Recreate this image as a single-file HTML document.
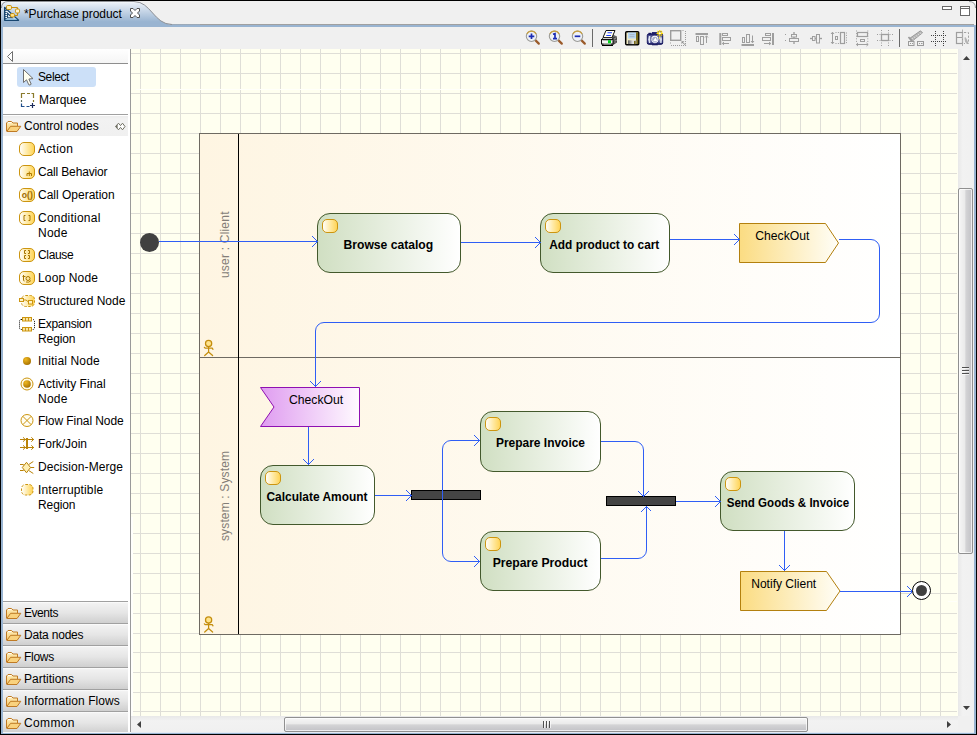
<!DOCTYPE html>
<html><head><meta charset="utf-8"><title>Purchase product</title>
<style>
html,body{margin:0;padding:0}
body{width:977px;height:735px;background:#000;position:relative;overflow:hidden;font-family:"Liberation Sans", sans-serif;font-size:12px;color:#000}
.a{position:absolute}
.t{position:absolute;white-space:nowrap;line-height:14px;height:14px}
.dr{position:absolute;left:3px;width:125px;height:21px;background:linear-gradient(#fdfdfd,#f1f1f1 8%,#e6e6e6 50%,#cfcfcf)}
svg text{font-family:"Liberation Sans", sans-serif}
</style></head>
<body>
<div class="a" style="left:1px;top:1px;width:975px;height:733px;background:#99b4d1"></div>
<div class="a" style="left:1px;top:1px;width:975px;height:24px;background:#f0f0f0"></div>
<div class="a" style="left:170px;top:24px;width:804px;height:1px;background:#a0a0a0"></div>
<div class="a" style="left:1px;top:25px;width:975px;height:2px;background:#99b4d1"></div>
<div class="a" style="left:3px;top:27px;width:971px;height:22px;background:#f0f0f0"></div>
<div class="a" style="left:3px;top:732px;width:971px;height:1px;background:#e4ebf3"></div>
<div class="a" style="left:3px;top:49px;width:127px;height:683px;background:#fff"></div>
<div class="a" style="left:130px;top:49px;width:1px;height:683px;background:#9a9a9a"></div>
<div class="a" style="left:3px;top:49px;width:125px;height:14px;background:linear-gradient(#ffffff,#f5f5f5)"></div>
<div class="a" style="left:3px;top:63px;width:125px;height:1px;background:#8e8e8e"></div>
<div class="a" style="left:17px;top:67px;width:79px;height:20px;background:#cce0f8;border-radius:3px"></div>
<div class="a" style="left:3px;top:114px;width:125px;height:1px;background:#a0a0a0"></div>
<div class="a" style="left:3px;top:116px;width:125px;height:20px;background:linear-gradient(#ececec,#f2f2f2 15%,#f0f0f0)"></div>
<div class="a" style="left:3px;top:601px;width:125px;height:1px;background:#a0a0a0"></div>
<div class="dr" style="top:602px"></div>
<div class="a" style="left:3px;top:623px;width:125px;height:1px;background:#a0a0a0"></div>
<div class="dr" style="top:624px"></div>
<div class="a" style="left:3px;top:645px;width:125px;height:1px;background:#a0a0a0"></div>
<div class="dr" style="top:646px"></div>
<div class="a" style="left:3px;top:667px;width:125px;height:1px;background:#a0a0a0"></div>
<div class="dr" style="top:668px"></div>
<div class="a" style="left:3px;top:689px;width:125px;height:1px;background:#a0a0a0"></div>
<div class="dr" style="top:690px"></div>
<div class="a" style="left:3px;top:711px;width:125px;height:1px;background:#a0a0a0"></div>
<div class="dr" style="top:712px"></div>
<div class="a" style="left:3px;top:732px;width:128px;height:1px;background:#f4f6f9"></div>
<div class="a" style="left:131px;top:49px;width:827px;height:595px;background-color:#fffff0;background-image:linear-gradient(to right,#dfded7 1px,transparent 1px),linear-gradient(to bottom,#dfded7 1px,transparent 1px);background-size:20px 20px;background-position:9px 4px"></div>
<div class="a" style="left:131px;top:644px;width:827px;height:59px;background-color:#fffff0;background-image:linear-gradient(to right,#dfded7 1px,transparent 1px),linear-gradient(to bottom,#dfded7 1px,transparent 1px);background-size:20px 20px;background-position:9px 8px"></div>
<div class="a" style="left:131px;top:703px;width:827px;height:13px;background-color:#fffff0;background-image:linear-gradient(to right,#dfded7 1px,transparent 1px),linear-gradient(to bottom,#dfded7 1px,transparent 1px);background-size:20px 20px;background-position:9px 8px"></div>
<div class="a" style="left:136px;top:89px;width:797px;height:1px;background:#fffffa"></div>
<div class="a" style="left:131px;top:517px;width:2px;height:199px;background:#fffffb"></div>
<div class="a" style="left:957px;top:49px;width:1px;height:667px;background:#fffff2"></div>
<div class="a" style="left:958px;top:49px;width:16px;height:683px;background:linear-gradient(to right,#e8e8e8,#f2f2f2 30%,#f0f0f0)"></div>
<div class="a" style="left:131px;top:716px;width:827px;height:16px;background:linear-gradient(#e8e8e8,#f2f2f2 30%,#f0f0f0)"></div>
<div class="a" style="left:958px;top:716px;width:16px;height:16px;background:#f0f0f0"></div>
<div class="a" style="left:958px;top:188px;width:13px;height:364px;border:1px solid #909090;border-radius:2px;box-shadow:inset 0 0 0 1px rgba(255,255,255,.7);background:linear-gradient(to right,#f6f6f6,#eaeaea 46%,#d4d4d6 52%,#c2c2c6)"></div>
<div class="a" style="left:284px;top:717px;width:522px;height:13px;border:1px solid #909090;border-radius:2px;box-shadow:inset 0 0 0 1px rgba(255,255,255,.7);background:linear-gradient(#f6f6f6,#eaeaea 46%,#d4d4d6 52%,#c2c2c6)"></div>
<svg class="a" style="left:0;top:0" width="977" height="735">
<defs>
<linearGradient id="tg" x1="0" y1="0" x2="0" y2="1"><stop offset="0" stop-color="#ffffff"/><stop offset="0.1" stop-color="#e6edf6"/><stop offset="0.8" stop-color="#99b4d1"/><stop offset="1" stop-color="#99b4d1"/></linearGradient>
<linearGradient id="ico" x1="0" y1="0" x2="1" y2="0"><stop offset="0" stop-color="#ffffff"/><stop offset="0.5" stop-color="#ffeaa6"/><stop offset="1" stop-color="#ffd352"/></linearGradient>
<linearGradient id="fold" x1="0" y1="0" x2="0" y2="1"><stop offset="0" stop-color="#fff0c0"/><stop offset="1" stop-color="#f5c868"/></linearGradient>
<radialGradient id="ball" cx="0.35" cy="0.3" r="0.8"><stop offset="0" stop-color="#f0b820"/><stop offset="1" stop-color="#a06c00"/></radialGradient>
<linearGradient id="metal" x1="0" y1="0" x2="1" y2="0"><stop offset="0" stop-color="#606060"/><stop offset="0.6" stop-color="#e8e8e8"/><stop offset="1" stop-color="#a0a0a0"/></linearGradient>
<linearGradient id="cam" x1="0" y1="0" x2="0" y2="1"><stop offset="0" stop-color="#1c1c70"/><stop offset="0.3" stop-color="#7880b0"/><stop offset="0.55" stop-color="#c4c8de"/><stop offset="0.8" stop-color="#50589a"/><stop offset="1" stop-color="#14145c"/></linearGradient>
</defs>
<path d="M1,27 L1,6 Q1,1 6,1 L134,1 C151,1 154,24.5 172,24.5 L200,24.5 L200,27 Z" fill="url(#tg)"/>
<path d="M1.5,8 Q1.5,1.5 8,1.5 L134,1.5 C151,1.5 154,24.5 172,24.5" fill="none" stroke="#8e9196" stroke-width="1"/>
<path d="M969,1 H976 V8 Q976,1 969,1 Z" fill="#fff"/><path d="M969,1.5 Q975.5,1.5 975.5,8" fill="none" stroke="#9a9da2" stroke-width="1"/>
<g><path d="M4.7,7.5 L4.7,20.3 L18.5,20.3 Z" fill="#f4f8fc" stroke="#17456f" stroke-width="1.4" stroke-linejoin="round"/><path d="M6,18.6 H16 L17.5,19.8 H6 Z" fill="#8cc4ea"/><path d="M7.6,13.4 L7.6,17.8 L12.2,17.8 Z" fill="#ffffff" stroke="#17456f" stroke-width="1.1"/><path d="M5,10.5h1.8M5,12.5h1.8M5,14.5h1.8M5,16.5h1.8M5,18.5h1.8" stroke="#17456f" stroke-width="0.9"/><path d="M11.5,7.5 L17.5,7.5 L17.5,9 M17.5,13 L17.5,15.5 L14.5,15.5" fill="none" stroke="#c8900c" stroke-width="1"/><rect x="6.5" y="5.5" width="5" height="4" rx="1.2" fill="#ffedb0" stroke="#c8900c"/><rect x="15.5" y="9" width="4" height="4" rx="1.2" fill="#fff4d0" stroke="#c8900c"/><rect x="10.5" y="13.5" width="4" height="3.6" rx="1.2" fill="#ffe28a" stroke="#c8900c"/></g>
<path d="M130.5,8.5 H133 L135,10.5 L137,8.5 H139.5 V11 L137.5,13 L139.5,15 V17.5 H137 L135,15.5 L133,17.5 H130.5 V15 L132.5,13 L130.5,11 Z" fill="#fff" stroke="#4e4e4e" stroke-width="1" stroke-linejoin="round"/>
<rect x="942.5" y="6.5" width="9" height="3" fill="#fff" stroke="#686868"/>
<rect x="960.5" y="6.5" width="9" height="9" fill="#fff" stroke="#686868"/>
<line x1="960" y1="8.5" x2="970" y2="8.5" stroke="#686868"/>
<path d="M12.5,51.5 L12.5,61.5 L7.5,56.5 Z" fill="#fff" stroke="#707070" stroke-width="1" stroke-linejoin="miter"/>
<path d="M23.5,69.5 L23.5,82.5 L26.5,79.8 L28.8,84.8 Q30,85.6 31.2,84.2 L28.9,79 L33,78.6 Z" fill="#fffff0" stroke="#6e6e6e" stroke-width="1" stroke-linejoin="round"/>
<path d="M21.5,98 V93.5 H25 M27,93.5 H30 M31.5,93.5 H33.5 V98 M33.5,100 V102" fill="none" stroke="#8a7a2c" stroke-width="1.2"/>
<path d="M21.5,100 V102" fill="none" stroke="#5a6a5c" stroke-width="1.2"/>
<path d="M21.5,103.5 V106.5 H24.5 M26.5,106.5 H29.5" fill="none" stroke="#1f4e8c" stroke-width="1.2"/>
<path d="M30,105.5 H35 M32.5,103 V108" fill="none" stroke="#1a2a5a" stroke-width="1.2"/>
<g transform="translate(6,121)"><path d="M0.5,10 V2 L2,0.5 H5.5 L7,2 H11.5 V5" fill="url(#fold)" stroke="#bf7a24" stroke-width="1" stroke-linejoin="round"/><path d="M2,1.6 H5.4" stroke="#fff" stroke-width="1"/><path d="M0.8,10.5 L4.6,5.3 H14.8 L11,10.5 Z" fill="#f9d27e" stroke="#bf7a24" stroke-width="1" stroke-linejoin="round"/></g>
<g transform="translate(6,608)"><path d="M0.5,10 V2 L2,0.5 H5.5 L7,2 H11.5 V5" fill="url(#fold)" stroke="#bf7a24" stroke-width="1" stroke-linejoin="round"/><path d="M2,1.6 H5.4" stroke="#fff" stroke-width="1"/><path d="M0.8,10.5 L4.6,5.3 H14.8 L11,10.5 Z" fill="#f9d27e" stroke="#bf7a24" stroke-width="1" stroke-linejoin="round"/></g>
<g transform="translate(6,630)"><path d="M0.5,10 V2 L2,0.5 H5.5 L7,2 H11.5 V5" fill="url(#fold)" stroke="#bf7a24" stroke-width="1" stroke-linejoin="round"/><path d="M2,1.6 H5.4" stroke="#fff" stroke-width="1"/><path d="M0.8,10.5 L4.6,5.3 H14.8 L11,10.5 Z" fill="#f9d27e" stroke="#bf7a24" stroke-width="1" stroke-linejoin="round"/></g>
<g transform="translate(6,652)"><path d="M0.5,10 V2 L2,0.5 H5.5 L7,2 H11.5 V5" fill="url(#fold)" stroke="#bf7a24" stroke-width="1" stroke-linejoin="round"/><path d="M2,1.6 H5.4" stroke="#fff" stroke-width="1"/><path d="M0.8,10.5 L4.6,5.3 H14.8 L11,10.5 Z" fill="#f9d27e" stroke="#bf7a24" stroke-width="1" stroke-linejoin="round"/></g>
<g transform="translate(6,674)"><path d="M0.5,10 V2 L2,0.5 H5.5 L7,2 H11.5 V5" fill="url(#fold)" stroke="#bf7a24" stroke-width="1" stroke-linejoin="round"/><path d="M2,1.6 H5.4" stroke="#fff" stroke-width="1"/><path d="M0.8,10.5 L4.6,5.3 H14.8 L11,10.5 Z" fill="#f9d27e" stroke="#bf7a24" stroke-width="1" stroke-linejoin="round"/></g>
<g transform="translate(6,696)"><path d="M0.5,10 V2 L2,0.5 H5.5 L7,2 H11.5 V5" fill="url(#fold)" stroke="#bf7a24" stroke-width="1" stroke-linejoin="round"/><path d="M2,1.6 H5.4" stroke="#fff" stroke-width="1"/><path d="M0.8,10.5 L4.6,5.3 H14.8 L11,10.5 Z" fill="#f9d27e" stroke="#bf7a24" stroke-width="1" stroke-linejoin="round"/></g>
<g transform="translate(6,718)"><path d="M0.5,10 V2 L2,0.5 H5.5 L7,2 H11.5 V5" fill="url(#fold)" stroke="#bf7a24" stroke-width="1" stroke-linejoin="round"/><path d="M2,1.6 H5.4" stroke="#fff" stroke-width="1"/><path d="M0.8,10.5 L4.6,5.3 H14.8 L11,10.5 Z" fill="#f9d27e" stroke="#bf7a24" stroke-width="1" stroke-linejoin="round"/></g>
<path d="M115.5,126.5 L118.5,123.2 L120.5,125.6 L122.5,123.2 L125,126.5 L122.5,129.8 L120.5,127.4 L118.5,129.8 Z" fill="#fff" stroke="#707064" stroke-width="1"/>
<path d="M115.5,126.5 L117.6,124.4 L117.6,128.6 Z" fill="#707064"/>
<rect x="19.5" y="142.5" width="15" height="13" rx="4.5" fill="url(#ico)" stroke="#cc9510"/>
<rect x="19.5" y="165.5" width="15" height="13" rx="4.5" fill="url(#ico)" stroke="#cc9510"/><path d="M27,176 V173.5 H31.5 V176 M29.3,171.5 V176" fill="none" stroke="#b07a00" stroke-width="1"/>
<rect x="19.5" y="188.5" width="15" height="13" rx="4.5" fill="url(#ico)" stroke="#cc9510"/><text x="21.8" y="198.4" font-size="8.5" fill="#a06c00" font-weight="bold" textLength="11" lengthAdjust="spacingAndGlyphs">o()</text>
<rect x="19.5" y="211.5" width="15" height="13" rx="4.5" fill="url(#ico)" stroke="#cc9510"/><path d="M25.5,215.5 H24 V220.5 H25.5 M28.5,215.5 H30 V220.5 H28.5" fill="none" stroke="#a87400" stroke-width="1"/>
<rect x="19.5" y="248.5" width="15" height="13" rx="4.5" fill="url(#ico)" stroke="#cc9510"/><path d="M26,250.5 H24.5 V253.5 H26 M28,250.5 H29.5 V253.5 H28 M26,255.5 H24.5 V258.5 H26 M28,255.5 H29.5 V258.5 H28" fill="none" stroke="#a87400" stroke-width="1"/>
<rect x="19.5" y="271.5" width="15" height="13" rx="4.5" fill="url(#ico)" stroke="#cc9510"/><path d="M23.5,275 V280 Q23.5,281 24.5,281 M22.5,276.5 H25.5" fill="none" stroke="#a87400" stroke-width="1"/><circle cx="28" cy="278.5" r="2" fill="none" stroke="#a87400"/><path d="M26,282 Q29,283 31,280.5" fill="none" stroke="#a87400" stroke-width="0.9"/>
<rect x="21.5" y="295.5" width="13" height="11" rx="4" fill="url(#ico)" stroke="#cc9510" stroke-dasharray="2.5,1.5"/>
<rect x="19.5" y="298.5" width="4" height="3" fill="#fff3c8" stroke="#cc9510"/><rect x="28.5" y="300.5" width="4" height="3.5" fill="#fff3c8" stroke="#cc9510"/><path d="M23.5,300 L26,300 L28.5,302" fill="none" stroke="#cc9510"/>
<rect x="19.5" y="319.5" width="15" height="10" rx="1.5" fill="none" stroke="#101010" stroke-dasharray="1,1"/>
<rect x="22.5" y="317.5" width="9" height="3.5" fill="#fbe6a2" stroke="#cc9510"/><path d="M25.5,317.5 v3.5 M28.5,317.5 v3.5" stroke="#cc9510"/>
<rect x="22.5" y="327.5" width="9" height="3.5" fill="#fbe6a2" stroke="#cc9510"/><path d="M25.5,327.5 v3.5 M28.5,327.5 v3.5" stroke="#cc9510"/>
<circle cx="27" cy="361" r="4" fill="url(#ball)"/>
<circle cx="27" cy="384" r="6" fill="#fffbe8" stroke="#cc9510"/><circle cx="27" cy="384" r="3.8" fill="url(#ball)"/>
<circle cx="27" cy="420.5" r="6" fill="#fffdf2" stroke="#cc9510"/><path d="M22.8,416.3 L31.2,424.7 M31.2,416.3 L22.8,424.7" stroke="#cc9510"/>
<rect x="26" y="438" width="2" height="11" fill="#b98207"/><path d="M20,439.5 H26 M23,437.3 L25.3,439.5 L23,441.7 M20,447.5 H26 M23,445.3 L25.3,447.5 L23,449.7 M28,439.5 H34 M31.3,437.3 L33.6,439.5 L31.3,441.7 M28,447.5 H34 M31.3,445.3 L33.6,447.5 L31.3,449.7" fill="none" stroke="#b98207" stroke-width="1"/>
<path d="M20,464.5 H23 L24.5,465.5 M20,470.5 H23 L24.5,469.5 M29,464.3 L33.3,461.5 M30.5,467.5 H34.2 M29,470.7 L33.3,473.5" fill="none" stroke="#b98207" stroke-width="1"/><path d="M26.5,462.3 L30.5,467.5 L26.5,472.8 L22.3,467.5 Z" fill="#fff0b4" stroke="#b98207"/>
<rect x="21.5" y="484.5" width="11.5" height="10.5" rx="4" fill="url(#ico)" stroke="#cc9510" stroke-dasharray="2.5,1.5"/>
<path d="M535.3,40.099999999999994 L538.8,43.599999999999994" stroke="#9a5a2a" stroke-width="2.2" stroke-linecap="round"/>
<circle cx="531.5" cy="36.3" r="5.2" fill="#eef1f6" stroke="#9c9c98" stroke-width="1.1"/>
<path d="M526.9,33.9 A5.2,5.2 0 0 1 536.1,33.9" fill="none" stroke="#c8a040" stroke-width="1.1"/>
<path d="M528.7,36.3 H534.3 M531.5,33.5 V39.1" stroke="#1c2cb4" stroke-width="1.7"/>
<path d="M558.3,40.099999999999994 L561.8,43.599999999999994" stroke="#9a5a2a" stroke-width="2.2" stroke-linecap="round"/>
<circle cx="554.5" cy="36.3" r="5.2" fill="#eef1f6" stroke="#9c9c98" stroke-width="1.1"/>
<path d="M549.9,33.9 A5.2,5.2 0 0 1 559.1,33.9" fill="none" stroke="#c8a040" stroke-width="1.1"/>
<path d="M553,34.2 L555,33.6 V38.6 M553,38.6 H557" fill="none" stroke="#1c2cb4" stroke-width="1.7"/>
<path d="M581.3,40.099999999999994 L584.8,43.599999999999994" stroke="#9a5a2a" stroke-width="2.2" stroke-linecap="round"/>
<circle cx="577.5" cy="36.3" r="5.2" fill="#eef1f6" stroke="#9c9c98" stroke-width="1.1"/>
<path d="M572.9,33.9 A5.2,5.2 0 0 1 582.1,33.9" fill="none" stroke="#c8a040" stroke-width="1.1"/>
<path d="M574.7,36.3 H580.3" stroke="#1c2cb4" stroke-width="1.7"/>
<line x1="592.5" y1="29" x2="592.5" y2="47" stroke="#6a6a6a" shape-rendering="crispEdges"/>
<line x1="899.5" y1="29" x2="899.5" y2="47" stroke="#6a6a6a" shape-rendering="crispEdges"/>
<g><path d="M612.5,34.5 L617,36.5 V42.5 L613,45 Z" fill="#4a4a4a"/><path d="M613.5,36 h1 M615.5,37 h1 M614.5,38.5 h1 M613.5,40 h1 M615.5,40.5 h1 M614.5,42 h1" stroke="#c8c8c8" stroke-width="0.9"/><path d="M606,30.5 H615 L612,37.5 H603 Z" fill="#fffff4" stroke="#111" stroke-width="1"/><path d="M607.5,32.7 H612 M606.3,35.5 H611" stroke="#2040ff" stroke-width="1.1"/><path d="M601.5,39.5 L603.5,37.5 H612.5 V39.5 Z" fill="#d0d0d0" stroke="#111" stroke-width="0.8"/><rect x="601.5" y="39.5" width="11.5" height="4.5" fill="#f4f4f4" stroke="#111"/><path d="M602.5,40.5 H612" stroke="#b0b0b0" stroke-width="0.9"/><rect x="608" y="40.2" width="3" height="3.3" fill="#00d420"/><path d="M602,45.2 H613" stroke="#000" stroke-width="1.6"/><path d="M603.5,44 H611" stroke="#fff" stroke-width="0.7"/></g>
<g><rect x="625.7" y="31.7" width="13" height="13" rx="1" fill="#efe9c4" stroke="#000" stroke-width="1.5"/><rect x="636" y="32.5" width="2.2" height="11.5" fill="#7a6a18"/><rect x="628" y="32.5" width="8" height="6" fill="#b8d8f6"/><path d="M629.5,34.7 H634.5 M629.5,36.7 H634.5" stroke="#a8b0b8" stroke-width="0.9"/><rect x="628" y="40.3" width="8.5" height="3.8" fill="url(#metal)"/><rect x="634" y="41" width="1.6" height="3.1" fill="#7a6a18"/></g>
<g><rect x="648.5" y="32.8" width="3" height="2" fill="#1a1a66"/><rect x="652" y="32" width="5.5" height="2.5" fill="#2a2a74"/><rect x="647.3" y="34" width="15.4" height="10.3" rx="1.4" fill="url(#cam)" stroke="#14145c" stroke-width="1"/><path d="M649.6,36 V43 M660.9,37.5 V43" stroke="#e4e8f2" stroke-width="1.3"/><circle cx="654.9" cy="39.3" r="4.1" fill="#f6f7fb" stroke="#2a2a74" stroke-width="0.8"/><circle cx="654.9" cy="39.5" r="2.7" fill="#a4aac8"/><path d="M653,41.2 L655.4,37.4 L657.4,41.2 Z" fill="#fff"/><rect x="652" y="44.3" width="5.8" height="1" fill="#14145c"/><path d="M659.8,30 V36.6 M656.5,33.3 H663 M657.5,31 L662,35.6 M662,31 L657.5,35.6" stroke="#ffdc00" stroke-width="1.2"/><circle cx="659.8" cy="33.3" r="1.1" fill="#fff"/><path d="M658.3,31.8 h1 M660.3,31.8 h1 M658.3,34.8 h1 M660.3,34.8 h1" stroke="#303080" stroke-width="0.9"/><path d="M660,36.6 L659.2,39" stroke="#ffe870" stroke-width="1.1"/></g>
<rect x="670.7" y="30.7" width="10" height="9.6" fill="none" stroke="#9c9c9c" stroke-width="1.4"/>
<path d="M682.5,30.5 H684 M685.5,31 V45.5 M670.5,42.5 V43.6 M671,45.5 H686" fill="none" stroke="#9c9c9c" stroke-width="1" stroke-dasharray="1,1"/>
<path d="M681.5,41.2 H684.3 L681.5,44 Z" fill="#8c8c8c"/><path d="M682.5,42.2 L685.5,45.2" stroke="#8c8c8c"/>
<path d="M695.5,34 H708" stroke="#9e9e9e" stroke-width="2"/><rect x="696.5" y="36.5" width="2" height="5" fill="none" stroke="#9e9e9e"/><rect x="700.5" y="36.5" width="3" height="8" fill="none" stroke="#9e9e9e"/><path d="M706.5,43 V36 M705,37.5 L706.5,35.8 L708,37.5" fill="none" stroke="#9e9e9e"/>
<path d="M720.3,33 V45" stroke="#9e9e9e" stroke-width="2"/><rect x="722.5" y="33.5" width="5" height="2" fill="none" stroke="#9e9e9e"/><rect x="722.5" y="37.5" width="8" height="3" fill="none" stroke="#9e9e9e"/><path d="M729,43.5 H722.5 M724,42 L722.3,43.5 L724,45" fill="none" stroke="#9e9e9e"/>
<path d="M741.5,45 H754" stroke="#9e9e9e" stroke-width="2"/><rect x="742.5" y="37.5" width="2" height="5" fill="none" stroke="#9e9e9e"/><rect x="746.5" y="34.5" width="3" height="8" fill="none" stroke="#9e9e9e"/><path d="M752.5,35.5 V42.5 M751,41 L752.5,42.8 L754,41" fill="none" stroke="#9e9e9e"/>
<path d="M773,33 V45" stroke="#9e9e9e" stroke-width="2"/><rect x="765.5" y="33.5" width="5" height="2" fill="none" stroke="#9e9e9e"/><rect x="762.5" y="37.5" width="8" height="3" fill="none" stroke="#9e9e9e"/><path d="M764,43.5 H770.5 M769,42 L770.8,43.5 L769,45" fill="none" stroke="#9e9e9e"/>
<path d="M794,32 V44" stroke="#9e9e9e" stroke-width="1.4"/><rect x="791.5" y="34.5" width="5" height="2.5" fill="#f0f0f0" stroke="#9e9e9e"/><rect x="789.5" y="38.5" width="9" height="3" fill="#f0f0f0" stroke="#9e9e9e"/><rect x="785" y="34" width="1" height="1" fill="#9e9e9e"/><rect x="785" y="40" width="1" height="1" fill="#9e9e9e"/>
<path d="M810,38.5 H822" stroke="#9e9e9e" stroke-width="1.4"/><rect x="812.5" y="36.5" width="2.5" height="4" fill="#f0f0f0" stroke="#9e9e9e"/><rect x="816.5" y="34.5" width="3" height="8.5" fill="#f0f0f0" stroke="#9e9e9e"/>
<path d="M832.5,32.5 V43.5 M831,34 L832.5,32.2 L834,34 M831,42 L832.5,43.8 L834,42" fill="none" stroke="#9e9e9e"/><rect x="835.5" y="36.5" width="2" height="3" fill="none" stroke="#9e9e9e"/><rect x="840.5" y="32.5" width="4" height="11" fill="none" stroke="#9e9e9e" stroke-width="1.2"/><path d="M835.5,32.5 H840 M835.5,43.5 H840 M846.5,32.5 V44" stroke="#9e9e9e" stroke-dasharray="1,1.4"/>
<rect x="857.5" y="32.5" width="10" height="4" fill="none" stroke="#9e9e9e" stroke-width="1.2"/><rect x="860.5" y="39.5" width="4" height="2" fill="none" stroke="#9e9e9e"/><path d="M856.5,44.5 H868 M858,43 L856.3,44.5 L858,46 M866.5,43 L868.2,44.5 L866.5,46" fill="none" stroke="#9e9e9e"/><path d="M856.5,30.5 V43 M867.8,30.5 V43" stroke="#9e9e9e" stroke-dasharray="1,1.6"/>
<rect x="881.5" y="34.5" width="7" height="6" fill="none" stroke="#9e9e9e" stroke-width="1.3"/><path d="M877,34.5 H893 M877,40.5 H893 M881.5,30 V46 M888.5,30 V46" stroke="#9e9e9e" stroke-dasharray="1,1.5"/>
<path d="M909.5,38.5 L920.5,30.8 L922.5,32.8 L913,40.5 Z" fill="#b4b4b4" stroke="#9a9a9a" stroke-width="1"/><path d="M908.5,37 L912,41.5" stroke="#9a9a9a" stroke-width="1.6"/><rect x="908.5" y="41.5" width="5.5" height="4" fill="none" stroke="#9a9a9a"/><rect x="917.5" y="41.5" width="6" height="4" fill="none" stroke="#9a9a9a"/><path d="M910,43.5 h1 M912,43.5 h1 M919,43.5 h1 M921,43.5 h1.5" stroke="#9a9a9a"/>
<path d="M935.5,31 V46.5 M943.5,31 V46.5 M931,35.5 H947 M931,41.5 H947" stroke="#404040" stroke-width="1" stroke-dasharray="1,1"/>
<rect x="956.5" y="32.5" width="6" height="11" fill="none" stroke="#9e9e9e" stroke-width="1.2"/><path d="M956.5,37.5 H962.5" stroke="#9e9e9e"/><path d="M962.5,29.5 V46.5" stroke="#b0b0b0" stroke-dasharray="2.5,1"/><path d="M964,32.5 H968.5 V43.5 H964" fill="none" stroke="#a4a4a4" stroke-dasharray="2.2,1.6"/><path d="M965.3,38 L967.5,42.8 L965.8,41.5 Z" fill="#b4b4b4" stroke="#b4b4b4" stroke-width="1.6" stroke-linejoin="round"/>
<path d="M912,38 l1.2,1.6 M914,36.6 l1.2,1.6 M916,35.2 l1.2,1.6 M918,33.8 l1.2,1.6 M920,32.4 l1.2,1.6" stroke="#e4e4e4" stroke-width="0.8"/>
<path d="M963,60 L966.5,56 L970,60 Z" fill="#404040"/>
<path d="M963,706 L970,706 L966.5,710 Z" fill="#404040"/>
<path d="M141,721 L141,728 L137,724.5 Z" fill="#404040"/>
<path d="M947,721 L947,728 L951,724.5 Z" fill="#404040"/>
<path d="M962,367.5 H969 M962,370.5 H969 M962,373.5 H969" stroke="#505050" stroke-width="1"/><path d="M962,368.5 H969 M962,371.5 H969 M962,374.5 H969" stroke="#fff" stroke-width="1" opacity=".7"/>
<path d="M543.5,721 V728 M546.5,721 V728 M549.5,721 V728" stroke="#505050" stroke-width="1"/><path d="M544.5,721 V728 M547.5,721 V728 M550.5,721 V728" stroke="#fff" stroke-width="1" opacity=".7"/>
</svg>
<div class="t" style="left:24px;top:7px;letter-spacing:-0.06px">*Purchase product</div>
<div class="t" style="left:38px;top:70px;letter-spacing:-0.4px">Select</div>
<div class="t" style="left:39px;top:93px;">Marquee</div>
<div class="t" style="left:24px;top:119px;">Control nodes</div>
<div class="t" style="left:38px;top:142px;letter-spacing:0.3px">Action</div>
<div class="t" style="left:38px;top:165px;letter-spacing:-0.15px">Call Behavior</div>
<div class="t" style="left:38px;top:188px;">Call Operation</div>
<div class="t" style="left:38px;top:211px;letter-spacing:0.23px">Conditional</div>
<div class="t" style="left:38px;top:226px;letter-spacing:0.25px">Node</div>
<div class="t" style="left:38px;top:248px;letter-spacing:-0.33px">Clause</div>
<div class="t" style="left:38px;top:271px;letter-spacing:0.15px">Loop Node</div>
<div class="t" style="left:38px;top:294px;">Structured Node</div>
<div class="t" style="left:38px;top:317px;letter-spacing:-0.27px">Expansion</div>
<div class="t" style="left:38px;top:332px;letter-spacing:-0.1px">Region</div>
<div class="t" style="left:38px;top:354px;letter-spacing:0.15px">Initial Node</div>
<div class="t" style="left:38px;top:377px;letter-spacing:0.03px">Activity Final</div>
<div class="t" style="left:38px;top:392px;letter-spacing:0.25px">Node</div>
<div class="t" style="left:38px;top:414px;letter-spacing:-0.07px">Flow Final Node</div>
<div class="t" style="left:38px;top:437px;letter-spacing:-0.05px">Fork/Join</div>
<div class="t" style="left:38px;top:460px;letter-spacing:0.07px">Decision-Merge</div>
<div class="t" style="left:38px;top:483px;letter-spacing:0.15px">Interruptible</div>
<div class="t" style="left:38px;top:498px;letter-spacing:-0.1px">Region</div>
<div class="t" style="left:24px;top:606px;letter-spacing:-0.45px">Events</div>
<div class="t" style="left:24px;top:628px;letter-spacing:-0.2px">Data nodes</div>
<div class="t" style="left:24px;top:650px;letter-spacing:-0.3px">Flows</div>
<div class="t" style="left:24px;top:672px;letter-spacing:0px">Partitions</div>
<div class="t" style="left:24px;top:694px;letter-spacing:0.07px">Information Flows</div>
<div class="t" style="left:24px;top:716px;letter-spacing:0.35px">Common</div>
<svg class="a" style="left:0;top:0" width="977" height="735">
<defs>
<linearGradient id="lane" x1="0" y1="0" x2="1" y2="0"><stop offset="0" stop-color="#fef5e2"/><stop offset="1" stop-color="#ffffff"/></linearGradient>
<linearGradient id="act" x1="0" y1="0" x2="1" y2="0"><stop offset="0" stop-color="#d0dfc2"/><stop offset="1" stop-color="#ffffff"/></linearGradient>
<linearGradient id="gold" x1="0" y1="0" x2="1" y2="0"><stop offset="0" stop-color="#fbdc82"/><stop offset="1" stop-color="#fffef8"/></linearGradient>
<linearGradient id="purp" x1="0" y1="0" x2="1" y2="0"><stop offset="0" stop-color="#df9cf0"/><stop offset="1" stop-color="#fffaff"/></linearGradient>
<linearGradient id="ico2" x1="0" y1="0" x2="1" y2="0"><stop offset="0" stop-color="#ffffff"/><stop offset="0.5" stop-color="#ffeaa6"/><stop offset="1" stop-color="#ffd352"/></linearGradient>
</defs>
<rect x="199.5" y="133.5" width="701" height="501" fill="url(#lane)" stroke="#6e6a62" stroke-width="1" shape-rendering="crispEdges"/>
<line x1="199" y1="357.5" x2="901" y2="357.5" stroke="#6e6a62" shape-rendering="crispEdges"/>
<line x1="238.5" y1="134" x2="238.5" y2="634" stroke="#000" shape-rendering="crispEdges"/>
<text transform="translate(229.4,278) rotate(-90)" font-size="12" fill="#837d77" textLength="66.5" lengthAdjust="spacing">user : Client</text>
<text transform="translate(229.4,541) rotate(-90)" font-size="12" fill="#837d77" textLength="90" lengthAdjust="spacing">system : System</text>
<g transform="translate(204,340.5)" fill="none" stroke="#c48e0e" stroke-width="1.25" stroke-linecap="round"><circle cx="4.6" cy="3" r="3.1" fill="#ffe48c"/><path d="M4.6,6.3 V11.5 M0.4,6.8 L1.2,7.7 H8.2 L9,8.8 M4.6,11.5 L0.7,15 M4.6,11.5 L8.6,15"/></g>
<g transform="translate(204,617)" fill="none" stroke="#c48e0e" stroke-width="1.25" stroke-linecap="round"><circle cx="4.6" cy="3" r="3.1" fill="#ffe48c"/><path d="M4.6,6.3 V11.5 M0.4,6.8 L1.2,7.7 H8.2 L9,8.8 M4.6,11.5 L0.7,15 M4.6,11.5 L8.6,15"/></g>
<circle cx="149.5" cy="242.5" r="9.5" fill="#404040"/>
<path d="M159,241.5 L318,241.5" fill="none" stroke="#2f5ef5" stroke-width="1"/>
<rect x="317.5" y="213.5" width="143" height="59" rx="12.5" ry="12.5" fill="url(#act)" stroke="#43592c"/>
<rect x="322.5" y="219.5" width="15" height="13" rx="4.5" ry="4.5" fill="url(#ico2)" stroke="#cc9510"/>
<text x="343.5" y="249" font-size="12" font-weight="bold" textLength="89.7" lengthAdjust="spacingAndGlyphs">Browse catalog</text>
<path d="M316,240h1v1h-1zM315,239h1v1h-1zM314,238h1v1h-1zM313,237h1v1h-1zM312,236h1v1h-1zM316,242h1v1h-1zM315,243h1v1h-1zM314,244h1v1h-1zM313,245h1v1h-1zM312,246h1v1h-1zM317,241h1v1h-1z" fill="#2f5ef5" shape-rendering="crispEdges"/>
<path d="M461,242.5 L541,242.5" fill="none" stroke="#2f5ef5" stroke-width="1"/>
<rect x="540.5" y="213.5" width="129" height="59" rx="12.5" ry="12.5" fill="url(#act)" stroke="#43592c"/>
<rect x="545.5" y="219.5" width="15" height="13" rx="4.5" ry="4.5" fill="url(#ico2)" stroke="#cc9510"/>
<text x="549.3" y="249" font-size="12" font-weight="bold" textLength="110" lengthAdjust="spacingAndGlyphs">Add product to cart</text>
<path d="M539,241h1v1h-1zM538,240h1v1h-1zM537,239h1v1h-1zM536,238h1v1h-1zM535,237h1v1h-1zM539,243h1v1h-1zM538,244h1v1h-1zM537,245h1v1h-1zM536,246h1v1h-1zM535,247h1v1h-1zM540,242h1v1h-1z" fill="#2f5ef5" shape-rendering="crispEdges"/>
<path d="M670,239.5 L740,239.5" fill="none" stroke="#2f5ef5" stroke-width="1"/>
<path d="M739.5,223.5 L825.5,223.5 L838.5,243 L825.5,262.5 L739.5,262.5 Z" fill="url(#gold)" stroke="#b3800e"/>
<path d="M738,238h1v1h-1zM737,237h1v1h-1zM736,236h1v1h-1zM735,235h1v1h-1zM734,234h1v1h-1zM738,240h1v1h-1zM737,241h1v1h-1zM736,242h1v1h-1zM735,243h1v1h-1zM734,244h1v1h-1zM739,239h1v1h-1z" fill="#2f5ef5" shape-rendering="crispEdges"/>
<text x="755.2" y="240" font-size="12" textLength="54.2" lengthAdjust="spacingAndGlyphs">CheckOut</text>
<path d="M839,239.5 L871,239.5 A8.5,8.5 0 0 1 879.5,248 L879.5,314 A8.5,8.5 0 0 1 871,322.5 L324,322.5 A8.5,8.5 0 0 0 315.5,331 L315.5,387" fill="none" stroke="#2f5ef5" stroke-width="1"/>
<path d="M314,385h1v1h-1zM313,384h1v1h-1zM312,383h1v1h-1zM311,382h1v1h-1zM310,381h1v1h-1zM316,385h1v1h-1zM317,384h1v1h-1zM318,383h1v1h-1zM319,382h1v1h-1zM320,381h1v1h-1zM315,386h1v1h-1z" fill="#2f5ef5" shape-rendering="crispEdges"/>
<path d="M260.5,387.5 L359.5,387.5 L359.5,426.5 L260.5,426.5 L274,407 Z" fill="url(#purp)" stroke="#8f10b2"/>
<text x="289" y="404" font-size="12" textLength="54.2" lengthAdjust="spacingAndGlyphs">CheckOut</text>
<path d="M308.5,427 L308.5,465" fill="none" stroke="#2f5ef5" stroke-width="1"/>
<path d="M307,463h1v1h-1zM306,462h1v1h-1zM305,461h1v1h-1zM304,460h1v1h-1zM303,459h1v1h-1zM309,463h1v1h-1zM310,462h1v1h-1zM311,461h1v1h-1zM312,460h1v1h-1zM313,459h1v1h-1zM308,464h1v1h-1z" fill="#2f5ef5" shape-rendering="crispEdges"/>
<rect x="260.5" y="465.5" width="114" height="59" rx="12.5" ry="12.5" fill="url(#act)" stroke="#43592c"/>
<rect x="265.5" y="471.5" width="15" height="13" rx="4.5" ry="4.5" fill="url(#ico2)" stroke="#cc9510"/>
<text x="266.5" y="501" font-size="12" font-weight="bold" textLength="101" lengthAdjust="spacingAndGlyphs">Calculate Amount</text>
<path d="M375,495.5 L412,495.5" fill="none" stroke="#2f5ef5" stroke-width="1"/>
<rect x="411.5" y="490.5" width="69" height="9" fill="#444444" stroke="#000" shape-rendering="crispEdges"/>
<path d="M410,494h1v1h-1zM409,493h1v1h-1zM408,492h1v1h-1zM407,491h1v1h-1zM406,490h1v1h-1zM410,496h1v1h-1zM409,497h1v1h-1zM408,498h1v1h-1zM407,499h1v1h-1zM406,500h1v1h-1zM411,495h1v1h-1z" fill="#2f5ef5" shape-rendering="crispEdges"/>
<path d="M442.5,500 L442.5,449 A8.5,8.5 0 0 1 451,440.5 L480,440.5" fill="none" stroke="#2f5ef5" stroke-width="1"/>
<path d="M478,439h1v1h-1zM477,438h1v1h-1zM476,437h1v1h-1zM475,436h1v1h-1zM474,435h1v1h-1zM478,441h1v1h-1zM477,442h1v1h-1zM476,443h1v1h-1zM475,444h1v1h-1zM474,445h1v1h-1zM479,440h1v1h-1z" fill="#2f5ef5" shape-rendering="crispEdges"/>
<path d="M442.5,495 L442.5,553 A8.5,8.5 0 0 0 451,561.5 L480,561.5" fill="none" stroke="#2f5ef5" stroke-width="1"/>
<path d="M478,560h1v1h-1zM477,559h1v1h-1zM476,558h1v1h-1zM475,557h1v1h-1zM474,556h1v1h-1zM478,562h1v1h-1zM477,563h1v1h-1zM476,564h1v1h-1zM475,565h1v1h-1zM474,566h1v1h-1zM479,561h1v1h-1z" fill="#2f5ef5" shape-rendering="crispEdges"/>
<rect x="480.5" y="411.5" width="120" height="60" rx="12.5" ry="12.5" fill="url(#act)" stroke="#43592c"/>
<rect x="485.5" y="417.5" width="15" height="13" rx="4.5" ry="4.5" fill="url(#ico2)" stroke="#cc9510"/>
<text x="496" y="447" font-size="12" font-weight="bold" textLength="89" lengthAdjust="spacingAndGlyphs">Prepare Invoice</text>
<rect x="480.5" y="531.5" width="120" height="59" rx="12.5" ry="12.5" fill="url(#act)" stroke="#43592c"/>
<rect x="485.5" y="537.5" width="15" height="13" rx="4.5" ry="4.5" fill="url(#ico2)" stroke="#cc9510"/>
<text x="492.7" y="567" font-size="12" font-weight="bold" textLength="94.8" lengthAdjust="spacingAndGlyphs">Prepare Product</text>
<rect x="606.5" y="496.5" width="69" height="9" fill="#444444" stroke="#000" shape-rendering="crispEdges"/>
<path d="M601,441.5 L635,441.5 A8.5,8.5 0 0 1 643.5,450 L643.5,497" fill="none" stroke="#2f5ef5" stroke-width="1"/>
<path d="M642,495h1v1h-1zM641,494h1v1h-1zM640,493h1v1h-1zM639,492h1v1h-1zM638,491h1v1h-1zM644,495h1v1h-1zM645,494h1v1h-1zM646,493h1v1h-1zM647,492h1v1h-1zM648,491h1v1h-1zM643,496h1v1h-1z" fill="#2f5ef5" shape-rendering="crispEdges"/>
<path d="M601,558.5 L638,558.5 A8.5,8.5 0 0 0 646.5,550 L646.5,506" fill="none" stroke="#2f5ef5" stroke-width="1"/>
<path d="M645,507h1v1h-1zM644,508h1v1h-1zM643,509h1v1h-1zM642,510h1v1h-1zM641,511h1v1h-1zM647,507h1v1h-1zM648,508h1v1h-1zM649,509h1v1h-1zM650,510h1v1h-1zM646,506h1v1h-1z" fill="#2f5ef5" shape-rendering="crispEdges"/>
<path d="M676,501.5 L721,501.5" fill="none" stroke="#2f5ef5" stroke-width="1"/>
<rect x="720.5" y="471.5" width="134" height="59" rx="12.5" ry="12.5" fill="url(#act)" stroke="#43592c"/>
<rect x="725.5" y="477.5" width="15" height="13" rx="4.5" ry="4.5" fill="url(#ico2)" stroke="#cc9510"/>
<text x="726.7" y="507" font-size="12" font-weight="bold" textLength="122.5" lengthAdjust="spacingAndGlyphs">Send Goods &amp; Invoice</text>
<path d="M719,500h1v1h-1zM718,499h1v1h-1zM717,498h1v1h-1zM716,497h1v1h-1zM715,496h1v1h-1zM719,502h1v1h-1zM718,503h1v1h-1zM717,504h1v1h-1zM716,505h1v1h-1zM715,506h1v1h-1zM720,501h1v1h-1z" fill="#2f5ef5" shape-rendering="crispEdges"/>
<path d="M784.5,531 L784.5,571" fill="none" stroke="#2f5ef5" stroke-width="1"/>
<path d="M783,569h1v1h-1zM782,568h1v1h-1zM781,567h1v1h-1zM780,566h1v1h-1zM779,565h1v1h-1zM785,569h1v1h-1zM786,568h1v1h-1zM787,567h1v1h-1zM788,566h1v1h-1zM789,565h1v1h-1zM784,570h1v1h-1z" fill="#2f5ef5" shape-rendering="crispEdges"/>
<path d="M740.5,571.5 L826.5,571.5 L840,591 L826.5,610.5 L740.5,610.5 Z" fill="url(#gold)" stroke="#b3800e"/>
<text x="751.2" y="588" font-size="12" textLength="65" lengthAdjust="spacingAndGlyphs">Notify Client</text>
<path d="M840,591.5 L913,591.5" fill="none" stroke="#2f5ef5" stroke-width="1"/>
<path d="M911,590h1v1h-1zM910,589h1v1h-1zM909,588h1v1h-1zM908,587h1v1h-1zM907,586h1v1h-1zM911,592h1v1h-1zM910,593h1v1h-1zM909,594h1v1h-1zM908,595h1v1h-1zM907,596h1v1h-1zM912,591h1v1h-1z" fill="#2f5ef5" shape-rendering="crispEdges"/>
<circle cx="921.5" cy="590.5" r="9" fill="#fff" stroke="#000"/>
<circle cx="921.5" cy="590.5" r="5.5" fill="#404040"/>
<rect x="948" y="601" width="9" height="1" fill="#fffffa"/>
</svg>
</body></html>
